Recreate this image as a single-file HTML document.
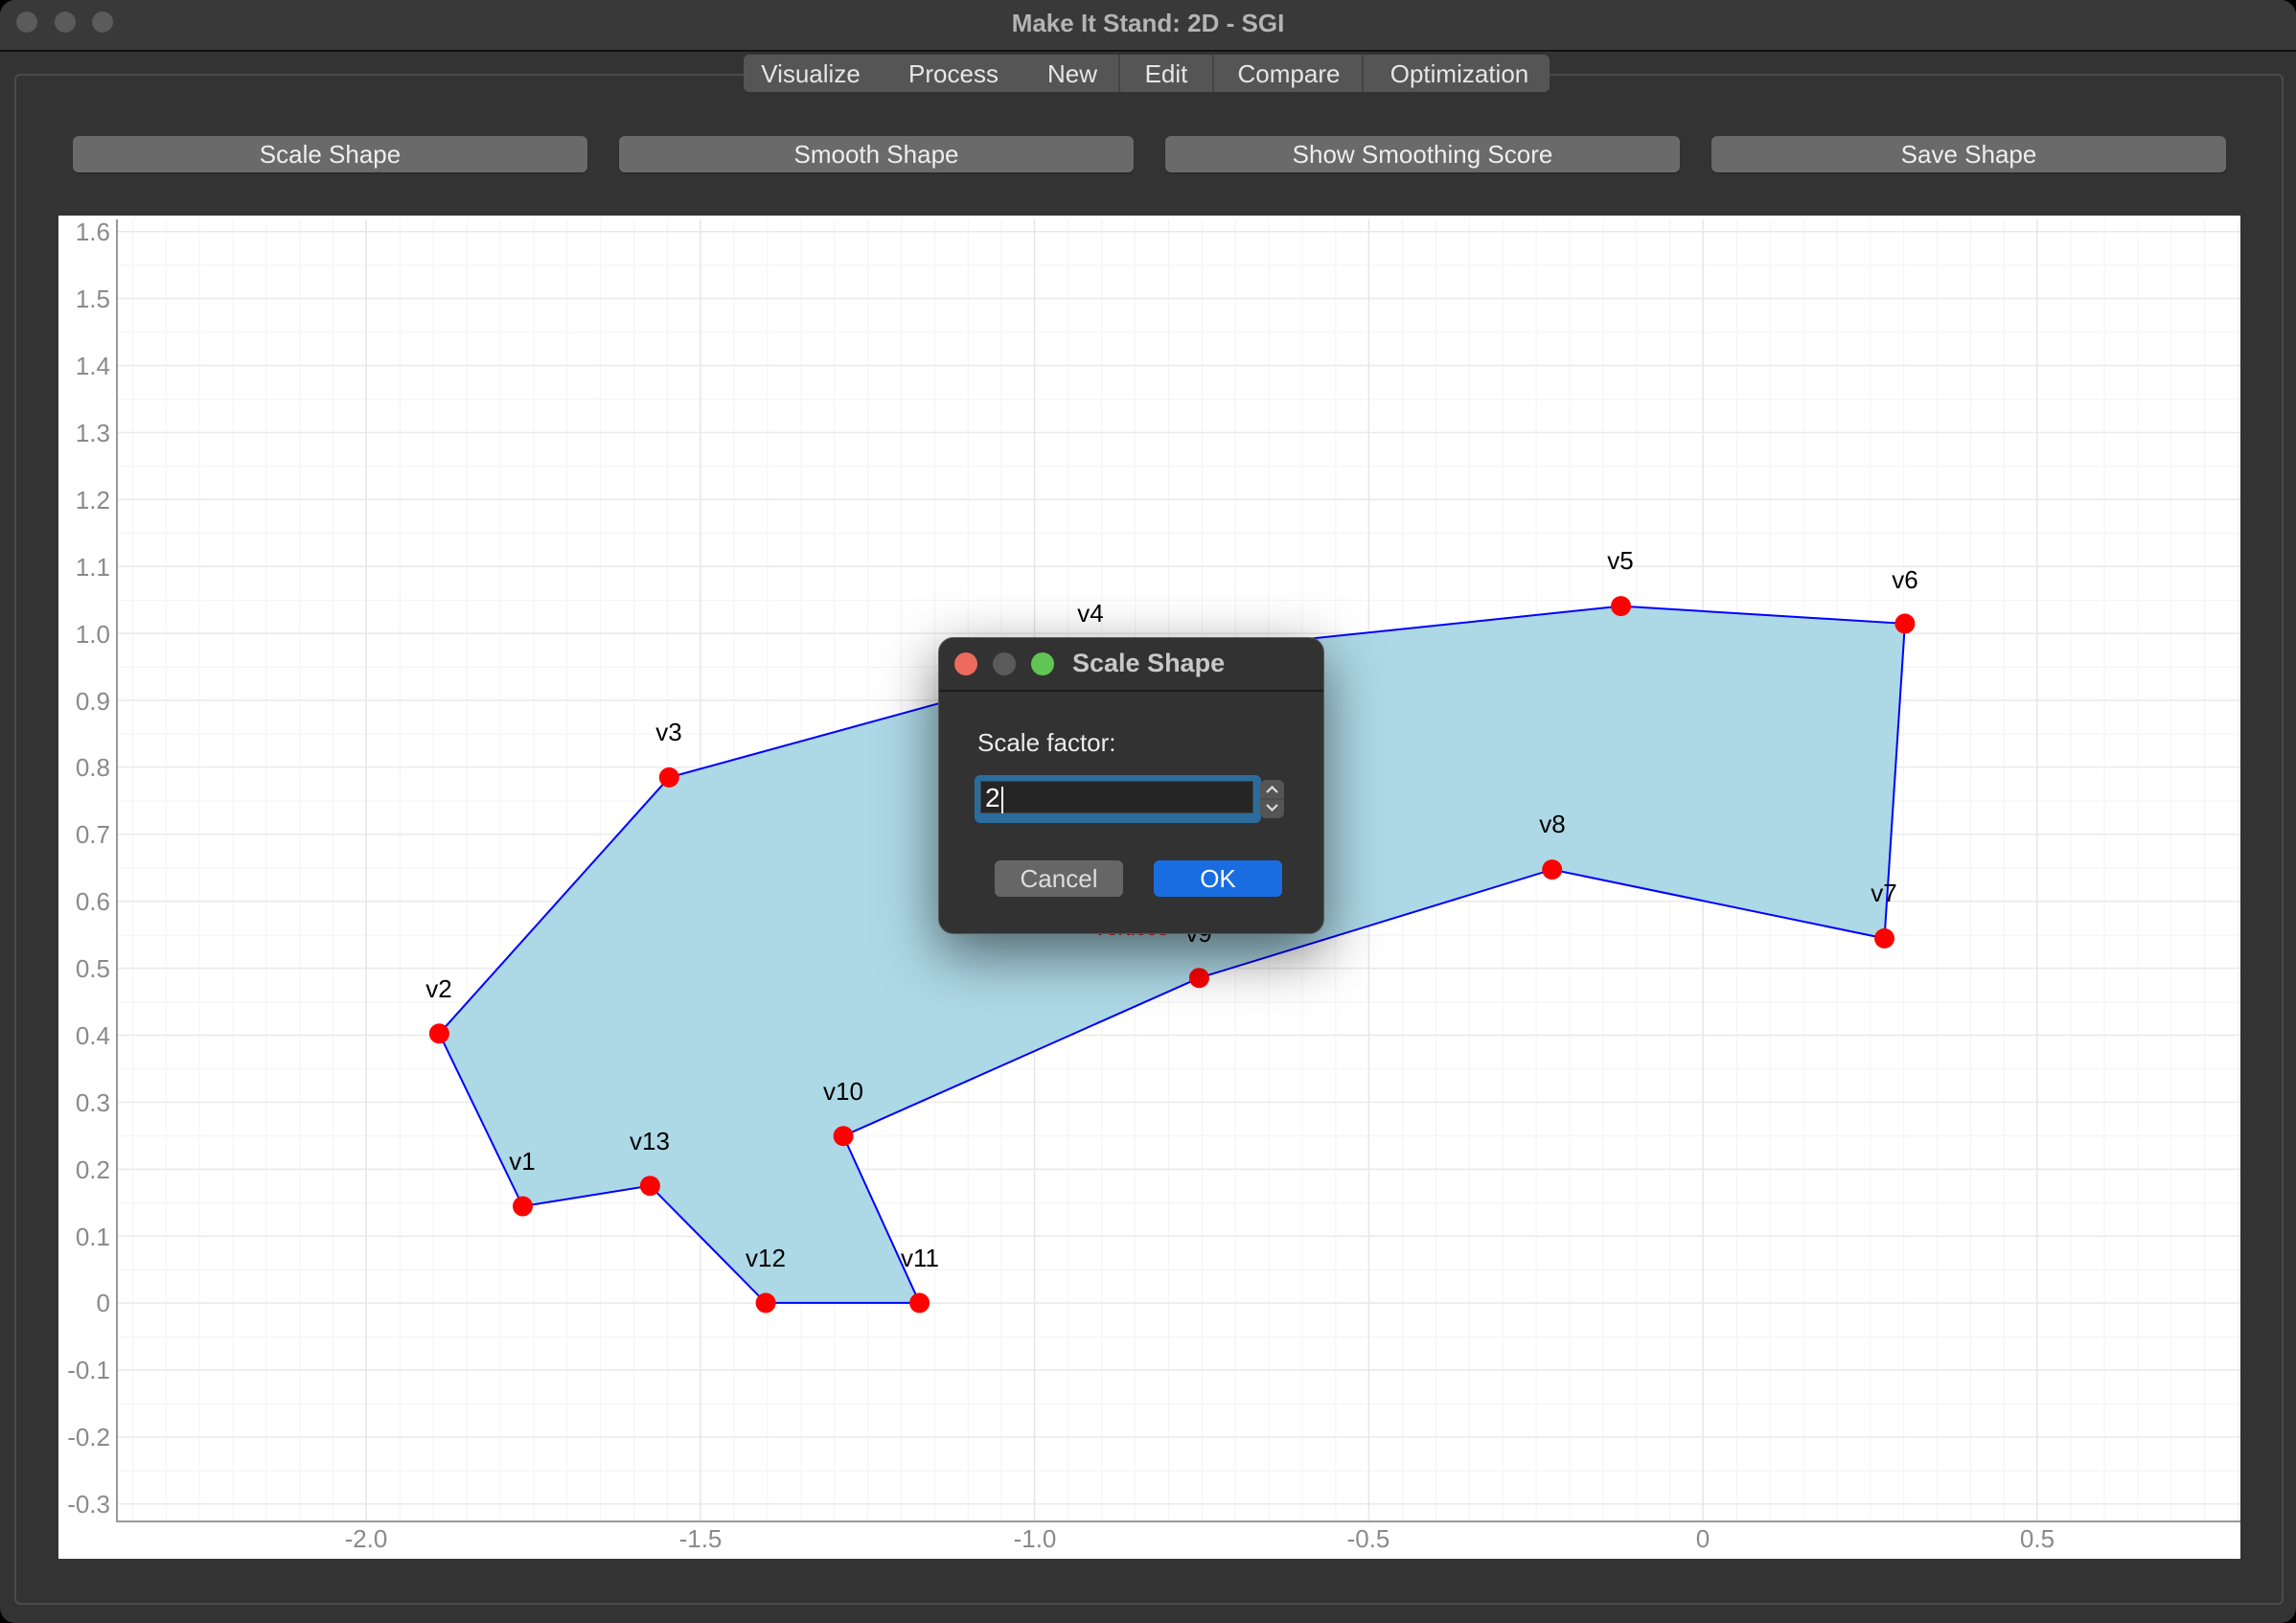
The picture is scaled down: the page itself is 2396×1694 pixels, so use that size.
<!DOCTYPE html>
<html><head><meta charset="utf-8"><style>
body{margin:0;width:2396px;height:1694px;background:#000;overflow:hidden;font-family:"Liberation Sans",sans-serif;position:relative}
.win{position:absolute;left:0;top:0;width:2396px;height:1694px;background:#333;border-radius:16px;overflow:hidden}
.tb{position:absolute;left:0;top:0;width:2396px;height:52px;background:#393939;border-bottom:2px solid #111}
.dot{position:absolute;top:12px;width:22px;height:22px;border-radius:50%;background:#5b5b5b}
.title{position:absolute;left:0;width:2396px;top:9px;text-align:center;color:#b4b4b4;font-weight:bold;font-size:26px}
.frame{position:absolute;left:15px;top:77px;width:2364px;height:1594px;border:2px solid #4a4a4a;border-radius:6px}
.tabs{position:absolute;left:776px;top:57px;width:841px;height:39px;background:#555;border-radius:6px;color:#e6e6e6;font-size:26px}
.tabs span{position:absolute;top:5px;transform:translateX(-50%)}
.sep{position:absolute;top:0;width:2px;height:39px;background:#444}
.btn{position:absolute;top:142px;height:38px;width:537px;background:#6a6a6a;border-radius:6px;color:#eee;font-size:26px;text-align:center;line-height:38px;box-shadow:0 1px 1px #222}
.dlg{position:absolute;left:979px;top:665px;width:401px;height:308px;background:#323232;border-radius:16px;border:1px solid #5a5a5a;box-shadow:0 20px 60px rgba(0,0,0,.55)}
</style></head><body>
<div class="win">
<div class="tb"><div class="dot" style="left:17px"></div><div class="dot" style="left:57px"></div><div class="dot" style="left:96px"></div><div class="title">Make It Stand: 2D - SGI</div></div>
<div class="frame"></div>
<div class="tabs">
<span style="left:70px">Visualize</span><span style="left:219px">Process</span><span style="left:343px">New</span><span style="left:441px">Edit</span><span style="left:569px">Compare</span><span style="left:747px">Optimization</span>
<div class="sep" style="left:391px"></div><div class="sep" style="left:489px"></div><div class="sep" style="left:645px"></div>
</div>
<div class="btn" style="left:76px">Scale Shape</div>
<div class="btn" style="left:646px">Smooth Shape</div>
<div class="btn" style="left:1216px">Show Smoothing Score</div>
<div class="btn" style="left:1786px">Save Shape</div>
<svg style="position:absolute;left:0;top:0" width="2396" height="1694" font-family="Liberation Sans, sans-serif">
<defs>
<pattern id="gx" patternUnits="userSpaceOnUse" x="1777" y="0" width="34.875" height="2000"><line x1="0.5" y1="0" x2="0.5" y2="2000" stroke="#f3f3f3" stroke-width="1"/></pattern>
<pattern id="gy" patternUnits="userSpaceOnUse" x="0" y="1360" width="3000" height="34.95"><line x1="0" y1="0.5" x2="3000" y2="0.5" stroke="#f3f3f3" stroke-width="1"/></pattern>
<clipPath id="cp"><rect x="122" y="229" width="2216" height="1359"/></clipPath>
</defs>
<rect x="61" y="225" width="2277" height="1402" fill="#fff"/>
<g clip-path="url(#cp)">
<rect x="122" y="229" width="2216" height="1359" fill="url(#gx)"/>
<rect x="122" y="229" width="2216" height="1359" fill="url(#gy)"/>
<g stroke="#e4e4e4" stroke-width="1.2">
<line x1="382" y1="229" x2="382" y2="1588"/><line x1="730.75" y1="229" x2="730.75" y2="1588"/><line x1="1079.5" y1="229" x2="1079.5" y2="1588"/><line x1="1428.25" y1="229" x2="1428.25" y2="1588"/><line x1="1777" y1="229" x2="1777" y2="1588"/><line x1="2125.75" y1="229" x2="2125.75" y2="1588"/>
</g>
<g stroke="#e8e8e8" stroke-width="1.2">
<line x1="122" x2="2338" y1="241.6" y2="241.6"/><line x1="122" x2="2338" y1="311.5" y2="311.5"/><line x1="122" x2="2338" y1="381.4" y2="381.4"/><line x1="122" x2="2338" y1="451.3" y2="451.3"/><line x1="122" x2="2338" y1="521.2" y2="521.2"/><line x1="122" x2="2338" y1="591.1" y2="591.1"/><line x1="122" x2="2338" y1="661" y2="661"/><line x1="122" x2="2338" y1="730.9" y2="730.9"/><line x1="122" x2="2338" y1="800.8" y2="800.8"/><line x1="122" x2="2338" y1="870.7" y2="870.7"/><line x1="122" x2="2338" y1="940.6" y2="940.6"/><line x1="122" x2="2338" y1="1010.5" y2="1010.5"/><line x1="122" x2="2338" y1="1080.4" y2="1080.4"/><line x1="122" x2="2338" y1="1150.3" y2="1150.3"/><line x1="122" x2="2338" y1="1220.2" y2="1220.2"/><line x1="122" x2="2338" y1="1290.1" y2="1290.1"/><line x1="122" x2="2338" y1="1360" y2="1360"/><line x1="122" x2="2338" y1="1429.9" y2="1429.9"/><line x1="122" x2="2338" y1="1499.8" y2="1499.8"/><line x1="122" x2="2338" y1="1569.7" y2="1569.7"/>
</g>
</g>
<line x1="122" y1="229" x2="122" y2="1589" stroke="#999" stroke-width="2"/>
<line x1="121" y1="1588" x2="2338" y2="1588" stroke="#999" stroke-width="2"/>
<g fill="#8a8a8a" font-size="26" text-anchor="end">
<text x="115" y="251">1.6</text><text x="115" y="321">1.5</text><text x="115" y="391">1.4</text><text x="115" y="461">1.3</text><text x="115" y="531">1.2</text><text x="115" y="601">1.1</text><text x="115" y="671">1.0</text><text x="115" y="741">0.9</text><text x="115" y="810">0.8</text><text x="115" y="880">0.7</text><text x="115" y="950">0.6</text><text x="115" y="1020">0.5</text><text x="115" y="1090">0.4</text><text x="115" y="1160">0.3</text><text x="115" y="1230">0.2</text><text x="115" y="1300">0.1</text><text x="115" y="1369">0</text><text x="115" y="1439">-0.1</text><text x="115" y="1509">-0.2</text><text x="115" y="1579">-0.3</text>
</g>
<g fill="#8a8a8a" font-size="26" text-anchor="middle">
<text x="382" y="1615">-2.0</text><text x="731" y="1615">-1.5</text><text x="1080" y="1615">-1.0</text><text x="1428" y="1615">-0.5</text><text x="1777" y="1615">0</text><text x="2126" y="1615">0.5</text>
</g>
<polygon points="545.5,1259 458.4,1078.8 698.3,811.4 1138.4,690.7 1691.5,632.6 1987.9,650.9 1966.5,979.4 1619.7,907.6 1251.4,1020.7 880.1,1185.7 959.6,1359.9 799.1,1359.9 678.4,1237.7" fill="#add8e6" stroke="#0000ff" stroke-width="2"/>
<text x="1180" y="976" fill="#d00" font-size="22" text-anchor="middle">Vertices</text>
<g fill="#ff0000">
<circle cx="545.5" cy="1259" r="10.5"/><circle cx="458.4" cy="1078.8" r="10.5"/><circle cx="698.3" cy="811.4" r="10.5"/><circle cx="1138.4" cy="690.7" r="10.5"/><circle cx="1691.5" cy="632.6" r="10.5"/><circle cx="1987.9" cy="650.9" r="10.5"/><circle cx="1966.5" cy="979.4" r="10.5"/><circle cx="1619.7" cy="907.6" r="10.5"/><circle cx="1251.4" cy="1020.7" r="10.5"/><circle cx="880.1" cy="1185.7" r="10.5"/><circle cx="959.6" cy="1359.9" r="10.5"/><circle cx="799.1" cy="1359.9" r="10.5"/><circle cx="678.4" cy="1237.7" r="10.5"/>
</g>
<g fill="#000" font-size="26" text-anchor="middle">
<text x="545" y="1221">v1</text><text x="458" y="1041">v2</text><text x="698" y="773">v3</text><text x="1138" y="649">v4</text><text x="1691" y="594">v5</text><text x="1988" y="614">v6</text><text x="1966" y="941">v7</text><text x="1620" y="869">v8</text><text x="1251" y="983">v9</text><text x="880" y="1148">v10</text><text x="960" y="1322">v11</text><text x="799" y="1322">v12</text><text x="678" y="1200">v13</text>
</g>
</svg>
<div class="dlg">
<div style="position:absolute;left:0;top:0;width:401px;height:54px;border-bottom:2px solid #1c1c1c"></div>
<div class="dot" style="left:16px;top:15px;width:24px;height:24px;background:#ed6a5e"></div>
<div class="dot" style="left:56px;top:15px;width:24px;height:24px;background:#5a5a5a"></div>
<div class="dot" style="left:96px;top:15px;width:24px;height:24px;background:#61c554"></div>
<div style="position:absolute;left:139px;top:11px;color:#c8c8c8;font-weight:bold;font-size:27px">Scale Shape</div>
<div style="position:absolute;left:40px;top:94px;color:#ececec;font-size:26px">Scale factor:</div>
<div style="position:absolute;left:37px;top:143px;width:299px;height:50px;background:#2a6d9c;border-radius:6px"></div>
<div style="position:absolute;left:43px;top:149px;width:285px;height:34px;background:#252525;border:1px solid #444;color:#fff;font-size:28px;line-height:34px;padding-left:4px;box-sizing:border-box">2<span style="display:inline-block;width:2px;height:28px;background:#fff;vertical-align:middle;margin-left:1px"></span></div>
<svg style="position:absolute;left:335px;top:148px" width="25" height="40"><rect x="0" y="0" width="25" height="40" rx="6" fill="#555"/><line x1="0" y1="20" x2="25" y2="20" stroke="#444"/><path d="M7 13 L12.5 7.5 L18 13 M7 26 L12.5 31.5 L18 26" stroke="#ddd" stroke-width="2.2" fill="none"/></svg>
<div style="position:absolute;left:58px;top:232px;width:134px;height:38px;background:#666;border-radius:6px;color:#ddd;font-size:26px;text-align:center;line-height:38px">Cancel</div>
<div style="position:absolute;left:224px;top:232px;width:134px;height:38px;background:#1a6de0;border-radius:6px;color:#fff;font-size:26px;text-align:center;line-height:38px">OK</div>
</div>
</div>
</body></html>
